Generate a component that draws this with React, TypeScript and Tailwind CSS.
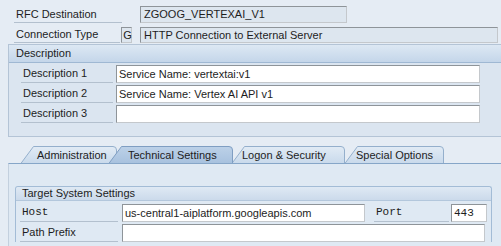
import type { ReactNode } from "react";

const sans = "font-['Liberation_Sans',Arial,sans-serif]";
const mono = "font-['Liberation_Mono','Courier_New',monospace]";

function Label({ children, className }: { children: ReactNode; className: string }) {
  return (
    <div className={`flex h-full shrink-0 items-center border-b border-[#b3c0ce] pl-[2px] text-[11px] leading-none text-[#1d1d1d] ${className}`}>
      {children}
    </div>
  );
}

function Field({ value, className, display }: { value?: string; className: string; display?: boolean }) {
  return (
    <div
      className={`flex h-full shrink-0 items-center border border-t-[#8e9499] border-l-[#8e9499] border-r-[#c4c8cc] border-b-[#c4c8cc] pl-[2px] text-[11px] leading-none text-[#1d1d1d] ${
        display ? "bg-[#dde6ef]" : "bg-white"
      } ${className}`}
    >
      {value}
    </div>
  );
}

type TabDef = { label: string; width: number; active?: boolean; cls: string };

const tabs: TabDef[] = [
  { label: "Administration", width: 97, cls: "w-[97px] pl-[17px]" },
  { label: "Technical Settings", width: 125, active: true, cls: "w-[125px] -ml-[9px] pl-[20px] z-10" },
  { label: "Logon & Security", width: 114, cls: "w-[114px] -ml-[2px] pl-[11px]" },
  { label: "Special Options", width: 100, cls: "w-[100px] -ml-[1px] pl-[12px]" },
];

function Tab({ tab, idx }: { tab: TabDef; idx: number }) {
  const w = tab.width;
  const id = `tabgrad${idx}`;
  return (
    <div className={`relative flex h-[17px] shrink-0 items-center pt-[2px] text-[11px] leading-none text-[#1d1d1d] ${tab.cls}`}>
      <svg className="absolute left-0 top-0" width={w} height={18} viewBox={`0 0 ${w} 18`}>
        <defs>
          <linearGradient id={id} x1="0" y1="0" x2="0" y2="1">
            <stop offset="0" stopColor={tab.active ? "#bcd1e8" : "#e1ebf5"} />
            <stop offset="1" stopColor={tab.active ? "#a7c1de" : "#c8d9eb"} />
          </linearGradient>
        </defs>
        <path
          d={`M0.5 18 L13.5 0.5 H${w - 4} Q${w - 0.5} 0.5 ${w - 0.5} 4 V18 Z`}
          fill={`url(#${id})`}
          stroke={tab.active ? "#7f9ec2" : "#94afcc"}
          strokeWidth="1"
        />
      </svg>
      <span className="relative">{tab.label}</span>
    </div>
  );
}

export default function App() {
  return (
    <div className={`h-[246px] w-[501px] overflow-hidden bg-[#e5ecf4] ${sans}`}>
      <div className="pl-[14px] pt-[6px]">
        <div className="flex h-[17px]">
          <Label className="w-[108px]">RFC Destination</Label>
          <Field display value="ZGOOG_VERTEXAI_V1" className="ml-[18px] w-[207px] pl-[3px]" />
        </div>
        <div className="mt-[4px] flex h-[16px]">
          <Label className="w-[106px]">Connection Type</Label>
          <Field display value="G" className="ml-[1px] w-[11px] justify-center pl-0 text-[10px]" />
          <Field display value="HTTP Connection to External Server" className="ml-[8px] w-[358px] pl-[3px]" />
        </div>
      </div>

      <section className="ml-[8px] mt-[1px] border-l border-t border-b border-[#b4c4d6] bg-[#dbe5f0]">
        <div className="flex h-[18px] items-center border-b border-[#9fb8d3] bg-gradient-to-b from-[#dde8f3] to-[#c4d6ea] pl-[7px] text-[11px] leading-none text-[#1d1d1d]">
          Description
        </div>
        <div className="flex flex-col gap-[2px] pb-[13px] pl-[12px] pt-[2px]">
          <div className="flex h-[18px]">
            <Label className="w-[92px]">Description 1</Label>
            <Field value="Service Name: vertextai:v1" className="ml-[3px] w-[364px]" />
          </div>
          <div className="flex h-[18px]">
            <Label className="w-[92px]">Description 2</Label>
            <Field value="Service Name: Vertex AI API v1" className="ml-[3px] w-[364px]" />
          </div>
          <div className="flex h-[18px]">
            <Label className="w-[92px]">Description 3</Label>
            <Field className="ml-[3px] w-[364px]" />
          </div>
        </div>
      </section>

      <div className="ml-[8px] mt-[9px]">
        <div className="flex h-[17px] pl-[12px]">
          {tabs.map((t, i) => (
            <Tab key={t.label} tab={t} idx={i} />
          ))}
        </div>
        <div className="relative z-20 h-[83px] border-l border-t border-l-[#c3d0de] border-t-[#86a6c8] bg-[#dfe9f3] pl-[6px] pt-[22px]">
          <div className="w-[477px] rounded-t-[3px] border border-b-0 border-[#a3bcd6]">
            <div className="flex h-[14px] items-center rounded-t-[3px] border-b border-[#b3c7dc] bg-gradient-to-b from-[#dfe9f4] to-[#cbdaeb] pl-[6px] text-[11px] leading-none text-[#1d1d1d]">
              Target System Settings
            </div>
            <div className="flex flex-col gap-[2px] pl-[4px] pt-[3px]">
              <div className="flex h-[18px]">
                <Label className={`w-[98px] ${mono}`}>Host</Label>
                <Field value="us-central1-aiplatform.googleapis.com" className="ml-[4px] w-[243px]" />
                <Label className={`ml-[9px] w-[75px] ${mono}`}>Port</Label>
                <Field value="443" className={`ml-[2px] w-[36px] ${mono}`} />
              </div>
              <div className="flex h-[18px]">
                <Label className="w-[98px]">Path Prefix</Label>
                <Field className="ml-[4px] w-[363px]" />
              </div>
            </div>
          </div>
        </div>
      </div>
    </div>
  );
}
